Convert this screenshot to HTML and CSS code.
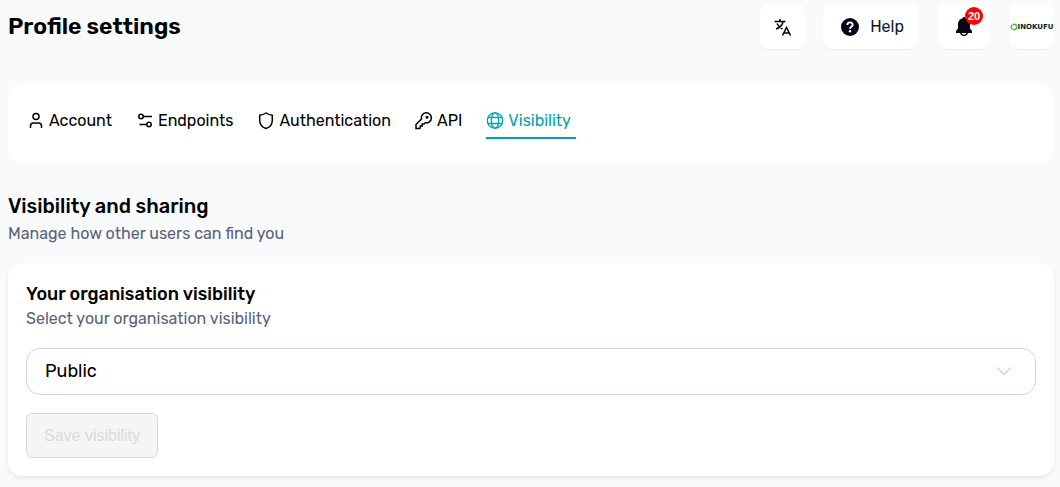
FILE: index.html
```html
<!DOCTYPE html>
<html lang="en">
<head>
    <meta charset="UTF-8">
    <meta name="viewport" content="width=device-width, initial-scale=1.0">
    <title>Profile settings</title>
    <link rel="stylesheet" href="styles.css">
</head>
<body>
    <header class="topbar">
        <h1>Profile settings</h1>
        <div class="actions">
            <button class="action" type="button" aria-label="Language">
                <svg width="20" height="20" viewBox="0 0 20 20" fill="none" stroke="#000" stroke-width="1.5">
                    <path d="M1.500 4.500h11M7 2v2.500M4 6.500c1.200 2.500 3 4.300 5.500 5.500M10 5c-.8 3.500-3 5.500-7 7"/>
                    <path d="M9.500 18.500 13.500 10.500 17.500 18.500M11 16h5"/>
                </svg>
            </button>
            <button class="action help" type="button">
                <svg width="18" height="18" viewBox="0 0 18 18">
                    <circle cx="9" cy="9" r="9" fill="#020617"/>
                    <path d="M6.300 7C6.300 3.500 11.700 3.500 11.700 6.800 11.700 8.800 9 8.800 9 10.800" fill="none" stroke="#fff" stroke-width="1.900"/>
                    <circle cx="9" cy="13.200" r="1.200" fill="#fff"/>
                </svg>
                Help
            </button>
            <button class="action bell" type="button" aria-label="Notifications">
                <svg width="18" height="20" viewBox="0 0 18 20" fill="#020617">
                    <path d="M9 0a1.300 1.300 0 0 0-1.300 1.300C4.900 1.900 3 4 3 7v4.500L1 14v2h16v-2l-2-2.500V7c0-3-1.900-5.100-4.700-5.700A1.300 1.300 0 0 0 9 0Z"/>
                    <path d="M5.700 15.500a3.300 2.800 0 0 0 6.600 0" fill="none" stroke="#020617" stroke-width="1.300"/>
                </svg>
                <span class="badge">20</span>
            </button>
            <button class="action brand" type="button">
                <svg width="8" height="8" viewBox="0 0 8 8" fill="none" stroke="#4caf50" stroke-width="1.500">
                    <circle cx="4" cy="4" r="2.700" stroke-dasharray="5 .6"/>
                </svg>
                INOKUFU
            </button>
        </div>
    </header>

    <nav class="tabs">
        <a class="tab" href="#account">
            <svg width="18" height="18" viewBox="0 0 18 18">
                <circle cx="9" cy="4.500" r="3"/>
                <path d="M3.500 16V14c0-2 1-3 3-3h5c2 0 3 1 3 3v2"/>
            </svg>
            Account
        </a>
        <a class="tab" href="#endpoints">
            <svg width="18" height="18" viewBox="0 0 18 18">
                <circle cx="5" cy="4.500" r="2.200"/>
                <path d="M7.200 4.500H16M3.500 12.500h7.300"/>
                <circle cx="13" cy="12.500" r="2.200"/>
            </svg>
            Endpoints
        </a>
        <a class="tab" href="#authentication">
            <svg width="18" height="18" viewBox="0 0 18 18">
                <path d="M9 1c2 1.400 4 2 6.300 2.200V8.500c0 4-2.300 6.700-6.300 8-4-1.300-6.300-4-6.300-8V3.200C5 3 7 2.400 9 1Z"/>
            </svg>
            Authentication
        </a>
        <a class="tab" href="#api">
            <svg width="18" height="18" viewBox="0 0 18 18">
                <path d="M6.500 7a5 5 0 1 1 3.800 3.700L9 12H7.200v1.900H5.300v1.900L4.500 16.500H1v-4Z"/>
                <circle cx="12" cy="5.300" r=".8"/>
            </svg>
            API
        </a>
        <a class="tab active" href="#visibility" aria-current="page">
            <svg width="18" height="18" viewBox="0 0 18 18">
                <circle cx="9" cy="8.500" r="7.700"/>
                <ellipse cx="9" cy="8.500" rx="3.700" ry="7.700"/>
                <path d="M2 5.500h14M2 11.500h14"/>
            </svg>
            Visibility
        </a>
    </nav>

    <main>
        <h2>Visibility and sharing</h2>
        <p class="hint">Manage how other users can find you</p>

        <form class="card">
            <label class="card-title" for="visibility">Your organisation visibility</label>
            <p class="hint">Select your organisation visibility</p>
            <div class="select-wrap">
                <select id="visibility">
                    <option>Public</option>
                    <option>Private</option>
                </select>
                <svg class="chevron" width="16" height="10" viewBox="0 0 16 10" fill="none" stroke="#cbd5e1" stroke-width="1.300">
                    <path d="M1 1.500 8 8.500 15 1.500"/>
                </svg>
            </div>
            <button class="save" type="submit" disabled>Save visibility</button>
        </form>
    </main>
</body>
</html>
```
FILE: styles.css
```css
* {
    box-sizing: border-box;
}

body {
    margin: 0;
    padding: 4px 6px 10px 8px;
    background: #f8fafc;
    color: #000;
    font-family: Rubik, Roboto, "Liberation Sans", sans-serif;
    font-size: 16px;
    line-height: 24px;
}

h1,
h2,
p {
    margin: 0;
}

.topbar {
    display: flex;
    justify-content: space-between;
    align-items: center;
    margin-bottom: 34px;
}

h1 {
    padding-bottom: 2px;
    font-size: 23px;
    font-weight: 600;
    line-height: 32px;
}

.actions {
    display: flex;
    gap: 18px;
}

.action {
    display: flex;
    align-items: center;
    justify-content: center;
    position: relative;
    min-width: 45px;
    height: 45px;
    padding: 0;
    border: none;
    border-radius: 8px;
    background: #fff;
    box-shadow: 0 1px 2px rgba(0, 0, 0, 0.05);
    color: #0f172a;
    font: inherit;
    cursor: pointer;
}

.help {
    gap: 11px;
    padding: 0 15px 0 18px;
}

.bell {
    padding: 0 18px;
}

.badge {
    position: absolute;
    top: 3px;
    right: 8px;
    width: 18px;
    height: 18px;
    border-radius: 50%;
    background: #f00;
    color: #fff;
    font-family: "Liberation Sans", Arial, sans-serif;
    font-size: 11px;
    font-weight: 700;
    line-height: 18px;
    text-align: center;
}

.brand {
    width: 45px;
    overflow: hidden;
    font-family: "DejaVu Sans", sans-serif;
    font-size: 7px;
    font-weight: 700;
}

.brand svg {
    flex-shrink: 0;
}

.tabs {
    display: flex;
    flex-wrap: wrap;
    gap: 19px;
    margin-bottom: 28px;
    padding: 20px 19px 25px;
    border-radius: 16px;
    background: #fff;
}

.tab {
    display: flex;
    align-items: center;
    gap: 4px;
    height: 36px;
    padding: 2px 5px 0 0;
    border-bottom: 2px solid transparent;
    color: #000;
    text-decoration: none;
}

.tab svg {
    fill: none;
    stroke: currentColor;
    stroke-width: 1.5;
}

.active {
    border-color: #00a3ad;
    color: #00a3ad;
}

.active svg {
    stroke-width: 1.3;
}

h2 {
    margin-bottom: 2px;
    font-size: 20px;
    font-weight: 500;
    line-height: 28px;
}

.hint {
    color: #5b6178;
}

.card {
    margin-top: 17px;
    padding: 19px 18px 18px;
    border-radius: 14px;
    background: #fff;
    box-shadow: 0 2px 4px rgba(0, 0, 0, 0.08);
}

.card-title {
    font-size: 18px;
    font-weight: 500;
}

.select-wrap {
    position: relative;
    margin: 17px 0 18px;
}

select {
    display: block;
    width: 100%;
    height: 47px;
    padding: 0 18px 2px;
    border: 1px solid #cbd5e1;
    border-radius: 14px;
    appearance: none;
    background: #fff;
    color: #000;
    font: inherit;
    font-size: 18px;
}

.chevron {
    position: absolute;
    top: 18px;
    right: 24px;
    pointer-events: none;
}

.save {
    height: 45px;
    padding: 0 17px;
    border: 1px solid #d9d9d9;
    border-radius: 6px;
    background: #f5f5f5;
    color: #d9d9d9;
    font-family: "Liberation Sans", Arial, sans-serif;
    font-size: 16px;
}
```
